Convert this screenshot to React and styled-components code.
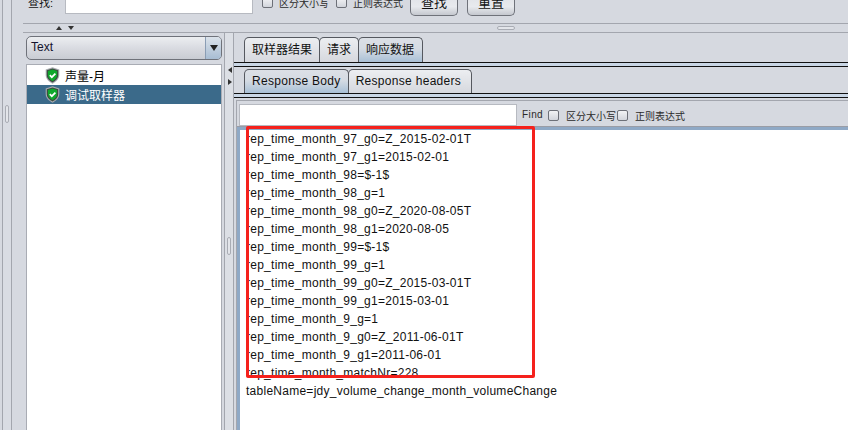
import React from 'react';
import styled, { createGlobalStyle } from 'styled-components';

const GlobalStyle = createGlobalStyle`
  html, body {
    margin: 0;
    padding: 0;
    background: #d6d9e0;
    overflow: hidden;
  }
`;

const cjk = `"Liberation Sans", "Noto Sans CJK SC", sans-serif`;

const Page = styled.div`
  display: flex;
  width: 848px;
  height: 430px;
  overflow: hidden;
  background: #d6d9e0;
  color: #111;
  font-family: ${cjk};
  font-size: 12px;
`;

const Rail = styled.div`
  display: flex;
  flex: none;
  align-items: flex-start;
  justify-content: center;
  width: 8px;
  margin-left: 2px;
  padding-top: 105px;
  border-left: 1px solid #a3a6ae;
  border-right: 1px solid #a3a6ae;
  background: #d9dce3;
`;

const RailGrip = styled.div`
  width: 2px;
  height: 16px;
  border: 1px solid #a9acb4;
  border-radius: 2px;
  background: #e3e5ea;
`;

const Main = styled.div`
  display: flex;
  flex: 1;
  flex-direction: column;
  min-width: 0;
`;

const SearchBar = styled.div`
  display: flex;
  flex: none;
  align-items: flex-end;
  height: 16px;
  padding-left: 16px;
`;

const SearchLabel = styled.span`
  width: 37px;
  margin-bottom: 6px;
  font-size: 11px;
  line-height: 13px;
`;

const SearchInput = styled.div`
  width: 186px;
  height: 15px;
  margin-bottom: 2px;
  border: 1px solid #b7bac1;
  background: #fff;
`;

const Box = styled.span`
  flex: none;
  box-sizing: border-box;
  width: 11px;
  height: 11px;
  border: 1px solid #6d7078;
  border-radius: 2px;
  background: linear-gradient(#f2f3f5, #d2d5dc);
`;

const SearchCheck = styled.label`
  display: flex;
  align-items: center;
  gap: 6px;
  height: 13px;
  margin-bottom: 7px;
  margin-left: ${(p) => p.$left}px;
  color: #2a2a2a;
  font-size: 10px;
  white-space: nowrap;
`;

const SearchButton = styled.div`
  display: flex;
  flex: none;
  align-items: flex-end;
  justify-content: center;
  box-sizing: border-box;
  width: 48px;
  height: 22px;
  padding-bottom: 3px;
  margin-left: ${(p) => p.$left}px;
  border: 1px solid #6f727a;
  border-top: none;
  border-radius: 0 0 5px 5px;
  background: linear-gradient(#dfe1e6, #e8eaee 60%, #c5c8cf);
  font-size: 13px;
  line-height: 18px;
`;

const TopGap = styled.div`
  flex: none;
  height: 7px;
`;

const HSplitter = styled.div`
  display: flex;
  flex: none;
  align-items: center;
  height: 8px;
  margin-left: 11px;
  padding-left: 33px;
  border-top: 1px solid #a3a6ae;
  border-bottom: 1px solid #a3a6ae;
`;

const ArrowUp = styled.span`
  width: 0;
  height: 0;
  border-left: 3px solid transparent;
  border-right: 3px solid transparent;
  border-bottom: 4px solid #333;
`;

const ArrowDown = styled.span`
  width: 0;
  height: 0;
  margin-left: 6px;
  border-left: 3px solid transparent;
  border-right: 3px solid transparent;
  border-top: 4px solid #333;
`;

const HGrip = styled.span`
  width: 16px;
  height: 2px;
  margin-left: 423px;
  border: 1px solid #a9acb4;
  border-radius: 2px;
  background: #e3e5ea;
`;

const Split = styled.div`
  display: flex;
  flex: 1;
  min-height: 0;
`;

const LeftPane = styled.div`
  display: flex;
  flex: none;
  flex-direction: column;
  gap: 4px;
  box-sizing: border-box;
  width: 210px;
  padding: 3px 0 0 14px;
`;

const Select = styled.div`
  display: flex;
  flex: none;
  box-sizing: border-box;
  height: 24px;
  border: 1px solid #6f727a;
  border-radius: 5px;
  overflow: hidden;
  background: linear-gradient(#eceef1, #d9dbe1 50%, #c9ccd3);
`;

const SelectValue = styled.div`
  flex: 1;
  padding-left: 4px;
  color: #14142e;
  font-size: 12px;
  line-height: 21px;
`;

const SelectArrow = styled.div`
  display: flex;
  flex: none;
  align-items: center;
  justify-content: center;
  width: 15px;
  border-left: 1px solid #8a9db4;
  background: linear-gradient(#dbe2ea, #a8bdd3);
  &::after {
    content: '';
    border-left: 4px solid transparent;
    border-right: 4px solid transparent;
    border-top: 6px solid #222;
  }
`;

const TreeList = styled.div`
  flex: 1;
  padding-top: 1px;
  border: 1px solid #a9acb4;
  border-bottom: none;
  background: #fff;
`;

const TreeRow = styled.div`
  display: flex;
  align-items: center;
  gap: 5px;
  height: 19px;
  padding-left: 18px;
  background: ${(p) => (p.$selected ? '#3b6a8a' : 'transparent')};
  color: ${(p) => (p.$selected ? '#fff' : '#000')};
  font-size: 12px;
`;

const VSplitter = styled.div`
  position: relative;
  display: flex;
  flex: none;
  align-items: flex-start;
  justify-content: center;
  box-sizing: border-box;
  width: 10px;
  margin-left: 2px;
  padding-top: 204px;
  border-left: 1px solid #a3a6ae;
  border-right: 1px solid #a3a6ae;
  background: #dcdfe5;
`;

const VGrip = styled.div`
  width: 2px;
  height: 16px;
  border: 1px solid #a9acb4;
  border-radius: 2px;
  background: #e3e5ea;
`;

const Nudge = styled.span`
  position: absolute;
  left: 3px;
  top: ${(p) => p.$top}px;
  border-top: 3px solid transparent;
  border-bottom: 3px solid transparent;
  ${(p) => (p.$right ? 'border-left: 4px solid #333;' : 'border-right: 4px solid #333;')}
`;

const RightPane = styled.div`
  display: flex;
  flex: 1;
  flex-direction: column;
  min-width: 0;
  padding-top: 4px;
`;

const TabStrip = styled.div`
  display: flex;
  flex: none;
  box-sizing: border-box;
  height: 26px;
  padding-left: 10px;
  border-bottom: 1px solid #111;
  box-shadow: 0 3px 0 #c9d6e5, 0 4px 0 #111;
`;

const SubStrip = styled(TabStrip)`
  height: 25px;
  margin-top: 6px;
`;

const Tab = styled.div`
  box-sizing: border-box;
  height: 100%;
  padding: 0 ${(p) => p.$padRight || 7}px 0 7px;
  border: 1px solid #55585f;
  border-bottom: none;
  border-radius: 5px 5px 0 0;
  margin-right: -1px;
  background: ${(p) =>
    p.$active
      ? 'linear-gradient(#dce0e6, #d5dbe3 45%, #a9c0d6)'
      : 'linear-gradient(#eceef1, #d6d8de)'};
  color: #111;
  font-size: 12px;
  line-height: 25px;
`;

const SubTab = styled(Tab)`
  letter-spacing: 0.3px;
  line-height: 22px;
`;

const Body = styled.div`
  position: relative;
  display: flex;
  flex: 1;
  flex-direction: column;
  min-height: 0;
  margin: 6px 0 0 2px;
  border-left: 1px solid #a3a6ae;
  border-top: 1px solid #a3a6ae;
`;

const FindBar = styled.div`
  display: flex;
  flex: none;
  align-items: flex-start;
  box-sizing: border-box;
  height: 26px;
  padding: 3px 0 0 2px;
  border-bottom: 1px solid #9a9da6;
`;

const FindInput = styled.div`
  flex: none;
  box-sizing: border-box;
  width: 278px;
  height: 22px;
  border: 1px solid #b7bac1;
  background: #fff;
`;

const FindLabel = styled.span`
  margin-left: 5px;
  color: #2a2a2a;
  font-size: 10px;
  letter-spacing: 0.4px;
  line-height: 22px;
`;

const FindCheck = styled.label`
  display: flex;
  align-items: center;
  gap: 7px;
  height: 22px;
  margin-left: ${(p) => p.$left}px;
  color: #2a2a2a;
  font-size: 10px;
  white-space: nowrap;
`;

const Output = styled.div`
  flex: 1;
  min-height: 0;
  overflow: hidden;
  padding-left: 6px;
  border-left: 3px solid #8fa9c6;
  border-top: 3px solid #8fa9c6;
  background: #fff;
`;

const OutputLine = styled.div`
  height: 18px;
  color: #111;
  font-size: 12px;
  line-height: 18px;
  letter-spacing: 0.26px;
  white-space: nowrap;
`;

const RedMark = styled.div`
  position: absolute;
  left: 9px;
  top: 25px;
  width: 283px;
  height: 246px;
  border: 3px solid #f5211c;
  border-radius: 2px;
`;

const Shield = () => (
  <svg width="15" height="17" viewBox="0 0 15 17" style={{ flex: 'none' }}>
    <path d="M7.5 0.3 L14.3 2.6 V8 C14.3 12 11 14.8 7.5 16.7 C4 14.8 0.7 12 0.7 8 V2.6 Z" fill="#a9adb1" />
    <path d="M7.5 1.4 L13.2 3.3 V8 C13.2 11.4 10.4 13.9 7.5 15.5 C4.6 13.9 1.8 11.4 1.8 8 V3.3 Z" fill="#3c4a40" />
    <path d="M7.5 2.6 L12.1 4.1 V8 C12.1 10.8 9.8 12.9 7.5 14.2 C5.2 12.9 2.9 10.8 2.9 8 V4.1 Z" fill="#0fa82c" />
    <path d="M4.8 8.2 L6.8 10.2 L10.4 6.6" fill="none" stroke="#fff" strokeWidth="1.7" />
  </svg>
);

const LINES = [
  'rep_time_month_97_g0=Z_2015-02-01T',
  'rep_time_month_97_g1=2015-02-01',
  'rep_time_month_98=$-1$',
  'rep_time_month_98_g=1',
  'rep_time_month_98_g0=Z_2020-08-05T',
  'rep_time_month_98_g1=2020-08-05',
  'rep_time_month_99=$-1$',
  'rep_time_month_99_g=1',
  'rep_time_month_99_g0=Z_2015-03-01T',
  'rep_time_month_99_g1=2015-03-01',
  'rep_time_month_9_g=1',
  'rep_time_month_9_g0=Z_2011-06-01T',
  'rep_time_month_9_g1=2011-06-01',
  'rep_time_month_matchNr=228',
  'tableName=jdy_volume_change_month_volumeChange',
];

const App = () => {
  return (
    <Page>
      <GlobalStyle />
      <Rail>
        <RailGrip />
      </Rail>
      <Main>
        <SearchBar>
          <SearchLabel>查找:</SearchLabel>
          <SearchInput />
          <SearchCheck $left={9}><Box />区分大小写</SearchCheck>
          <SearchCheck $left={7}><Box />正则表达式</SearchCheck>
          <SearchButton $left={7}>查找</SearchButton>
          <SearchButton $left={9}>重置</SearchButton>
        </SearchBar>
        <TopGap />
        <HSplitter>
          <ArrowUp />
          <ArrowDown />
          <HGrip />
        </HSplitter>
        <Split>
          <LeftPane>
            <Select>
              <SelectValue>Text</SelectValue>
              <SelectArrow />
            </Select>
            <TreeList>
              <TreeRow><Shield />声量-月</TreeRow>
              <TreeRow $selected><Shield />调试取样器</TreeRow>
            </TreeList>
          </LeftPane>
          <VSplitter>
            <Nudge $top={34} />
            <Nudge $top={46} $right />
            <VGrip />
          </VSplitter>
          <RightPane>
            <TabStrip>
              <Tab>取样器结果</Tab>
              <Tab>请求</Tab>
              <Tab $active $padRight={8}>响应数据</Tab>
            </TabStrip>
            <SubStrip>
              <SubTab $active>Response Body</SubTab>
              <SubTab $padRight={10}>Response headers</SubTab>
            </SubStrip>
            <Body>
              <FindBar>
                <FindInput />
                <FindLabel>Find</FindLabel>
                <FindCheck $left={5}><Box />区分大小写</FindCheck>
                <FindCheck $left={1}><Box />正则表达式</FindCheck>
              </FindBar>
              <Output>
                {LINES.map((line) => (
                  <OutputLine key={line}>{line}</OutputLine>
                ))}
              </Output>
              <RedMark />
            </Body>
          </RightPane>
        </Split>
      </Main>
    </Page>
  );
};

export default App;
